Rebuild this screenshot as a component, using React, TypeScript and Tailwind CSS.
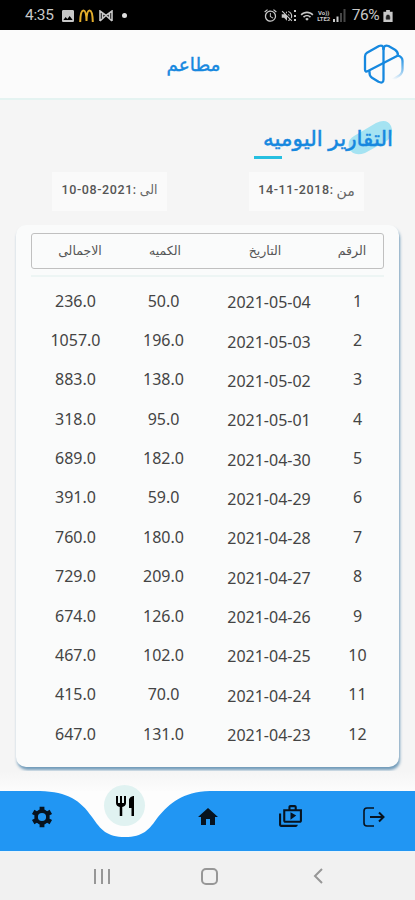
import React from 'react';
import {
  MdAlarm,
  MdHome,
  MdImage,
  MdOutlineShopTwo,
  MdRestaurant,
  MdVolumeOff,
  MdWifi
} from 'react-icons/md';

interface Report {
  id: number;
  date: string;
  quantity: string;
  total: string;
}

const reports: Report[] = [
  { id: 1, date: '2021-05-04', quantity: '50.0', total: '236.0' },
  { id: 2, date: '2021-05-03', quantity: '196.0', total: '1057.0' },
  { id: 3, date: '2021-05-02', quantity: '138.0', total: '883.0' },
  { id: 4, date: '2021-05-01', quantity: '95.0', total: '318.0' },
  { id: 5, date: '2021-04-30', quantity: '182.0', total: '689.0' },
  { id: 6, date: '2021-04-29', quantity: '59.0', total: '391.0' },
  { id: 7, date: '2021-04-28', quantity: '180.0', total: '760.0' },
  { id: 8, date: '2021-04-27', quantity: '209.0', total: '729.0' },
  { id: 9, date: '2021-04-26', quantity: '126.0', total: '674.0' },
  { id: 10, date: '2021-04-25', quantity: '102.0', total: '467.0' },
  { id: 11, date: '2021-04-24', quantity: '70.0', total: '415.0' },
  { id: 12, date: '2021-04-23', quantity: '131.0', total: '647.0' }
];

const StatusBar: React.FC = () => (
  <div className="flex h-[30px] items-center bg-black pl-[25px] pr-[22px] pt-px font-['Roboto',sans-serif] text-[#c8c8c8]">
    <span className="w-[35px] text-[15.5px] tracking-[-0.3px]">4:35</span>
    <MdImage className="size-4" />
    {/* Golden arches */}
    <svg width="15" height="14" viewBox="0 0 15 14" className="ml-[3px]" fill="none" stroke="#e3ad2b" strokeWidth="2">
      <path d="M1.2 13C1.4 5 2.7 1.5 4.4 1.5S7.4 5 7.5 12C7.6 5 8.8 1.5 10.6 1.5S13.6 5 13.8 13" />
    </svg>
    <svg width="14" height="12" viewBox="0 0 14 12" className="ml-[5px]" fill="none" stroke="currentColor" strokeWidth="1.6">
      <path d="M1 11V1l6 4.500L13 1v10M1 11l6-5.500 6 5.500M3.500 3.500v5M10.500 3.500v5" />
    </svg>
    <span className="ml-[9px] size-[5px] rounded-full bg-[#dedede]" />
    <div className="ml-auto flex items-center">
      <MdAlarm className="size-[15px]" />
      <div className="ml-[2px] flex items-center">
        <MdVolumeOff className="size-[14px]" />
        <span className="h-[11px] border-l-2 border-dotted border-current" />
      </div>
      <MdWifi className="ml-[4px] size-[14px]" />
      <div className="ml-[2px] flex w-[16px] flex-col items-center text-[6px] font-bold leading-[6px]">
        <span>Vo))</span>
        <span>LTE2</span>
      </div>
      <svg width="13" height="13" viewBox="0 0 13 13" className="ml-[1px]" fill="currentColor">
        <path d="M0 10h2v3H0zM3.500 7.500h2V13h-2z" />
        <path d="M7 4h2v9H7zM10.500 0h2v13h-2z" opacity=".35" />
      </svg>
      <span className="ml-[6px] text-[15.5px] tracking-[-0.5px]">76%</span>
      <svg width="10" height="12" viewBox="0 0 10 13" className="ml-[4px]">
        <path d="M3 0h4v2h3v11H0V2h3z" fill="currentColor" />
        <path d="M3 7h4v3H3zM3.700 7V5.500h2.600V7" fill="#222" stroke="#222" strokeWidth=".6" />
      </svg>
    </div>
  </div>
);

const Logo: React.FC = () => (
  <svg width="41" height="42" viewBox="0 0 41 42" fill="none" strokeWidth="2.3" strokeLinejoin="round" strokeLinecap="round">
    <defs>
      <linearGradient id="logoFade" x1="38" y1="14" x2="32" y2="37" gradientUnits="userSpaceOnUse">
        <stop offset="0" stopColor="#1c8fe3" />
        <stop offset=".5" stopColor="#1c8fe3" stopOpacity=".55" />
        <stop offset="1" stopColor="#1c8fe3" stopOpacity="0" />
      </linearGradient>
    </defs>
    <g stroke="#1688df">
      {/* left half, split by the diagonal */}
      <path d="M20.500 6Q20.500 1.500 16 3L4 9.800Q2 11 2 13.500V26.500Q2 29.500 5 28L35 12.500" />
      <path d="M6.500 28.500Q6 32.500 9 34.800L15.500 38.800Q20.500 41 20.500 36.500V6" />
      <path d="M20.500 6Q21 1.500 25.500 3L32 6.800Q35 8.600 35 12.500" />
    </g>
    <path d="M35 12.500Q39.500 14 39.500 18V26Q39.500 30.500 36 32.800L30 36.500" stroke="url(#logoFade)" />
  </svg>
);

const GearIcon: React.FC = () => (
  <svg width="22" height="22" viewBox="-11 -11 22 22" fill="none" stroke="currentColor">
    <circle r="5.900" strokeWidth="3.600" />
    <path
      d="M0-10.200V-6.500M0 10.200V6.500M-8.800-5.100L-5.600-3.200M8.800 5.100L5.600 3.200M8.800-5.100L5.600-3.200M-8.800 5.100L-5.600 3.200"
      strokeWidth="4.800"
    />
  </svg>
);

const LogoutIcon: React.FC = () => (
  <svg width="22" height="20" viewBox="0 0 22 20" fill="none" stroke="#07131f" strokeWidth="1.600">
    <path d="M11 1H4Q1 1 1 4v12q0 3 3 3h7" />
    <path d="M7 10h13M16 5.500l4.500 4.500-4.500 4.500" strokeWidth="2" />
  </svg>
);

const TabBar: React.FC = () => (
  <nav className="relative h-[60px] bg-[#2196f3]">
    {/* Notch under the active tab */}
    <svg width="170" height="47" viewBox="0 0 170 47" className="absolute left-[40px] top-0">
      <path d="M0 0H170C142 1 130 12 118 26C109 39 103 46 85 46C67 46 61 39 52 26C40 9 28 1 0 0Z" fill="#fdfdfd" />
    </svg>
    <div className="relative grid h-full grid-cols-5 place-items-center pb-[9px] text-[#07131f]">
      <GearIcon />
      <div className="relative top-[-11px] flex size-[41px] items-center justify-center rounded-full bg-[#e0f2f1] text-black">
        <MdRestaurant className="size-6" />
      </div>
      <MdHome className="size-[24px]" />
      <MdOutlineShopTwo className="size-[25px]" />
      <LogoutIcon />
    </div>
  </nav>
);

const SystemNav: React.FC = () => (
  <div className="grid h-[49px] grid-cols-[203px_12px_200px] items-center border-t border-[#e8f4fb] bg-[#f1f1f1] text-[#979797]">
    <div className="flex justify-center gap-[5px]">
      <span className="h-[15px] w-[2px] bg-current" />
      <span className="h-[15px] w-[2px] bg-current" />
      <span className="h-[15px] w-[2px] bg-current" />
    </div>
    <span className="-ml-[2px] size-[17px] rounded-[5px] border-2 border-current" />
    <svg width="10" height="16" viewBox="0 0 10 16" className="ml-[98px]" fill="none" stroke="currentColor" strokeWidth="2">
      <path d="M9 1L2 8l7 7" />
    </svg>
  </div>
);

export default function App() {
  return (
    <div className="flex h-[900px] w-[415px] flex-col overflow-hidden bg-[#f5f5f5] font-['Noto_Sans','DejaVu_Sans',sans-serif]">
      <StatusBar />

      <header className="grid h-[70px] grid-cols-[1fr_auto_1fr] items-center border-b-2 border-[#e4f3f1] bg-[#fbfbfb]">
        <span />
        <h1 dir="rtl" className="mr-[28px] text-[18.5px] text-[#1688df] [-webkit-text-stroke:0.4px]">مطاعم</h1>
        <div className="flex justify-end pr-[11px]">
          <Logo />
        </div>
      </header>

      {/* Title */}
      <div className="flex h-[72px] justify-end pr-[22px] pt-[17px]">
        <div className="relative h-[44px]">
          <svg width="48" height="38" viewBox="0 0 48 38" className="absolute right-0 top-[1px]">
            <path d="M9 18L31 5Q42 0 46 8Q50 18 40 24L20 35Q8 39 4 30Q2 22 9 18Z" fill="#a5e3f2" />
          </svg>
          <h2 dir="rtl" className="relative whitespace-nowrap text-[21.5px] leading-[42px] text-[#1688df] [-webkit-text-stroke:0.5px]">
            التقارير اليوميه
          </h2>
          <span className="absolute bottom-[2px] left-[-9px] h-[3px] w-[28px] bg-[#26bfe0]" />
        </div>
      </div>

      {/* Date range */}
      <div className="flex h-[39px] justify-between pl-[52px] pr-[51px] text-[12.5px] text-[#666]">
        <div dir="rtl" className="flex w-[115px] items-center justify-center gap-[3px] bg-[#fafafa] pb-[2px]">
          <span>الى</span>
          <span dir="ltr" className="font-['Roboto',sans-serif] font-medium tracking-[0.6px] text-[#555]">10-08-2021:</span>
        </div>
        <div dir="rtl" className="flex w-[115px] items-center justify-center gap-[3px] bg-[#fafafa] pb-[2px]">
          <span className="text-[14px]">من</span>
          <span dir="ltr" className="font-['Roboto',sans-serif] font-medium tracking-[0.6px] text-[#555]">14-11-2018:</span>
        </div>
      </div>

      <main className="mx-4 mt-[14px] h-[542px] rounded-[10px] bg-[#fafbfb] px-[15px] pt-[8px] shadow-[1px_3px_3px_rgba(70,125,165,0.75)]">
        <div className="grid h-[36px] grid-cols-[96px_74px_126px_48px] items-center rounded-[3px] border border-[#c0c0c0] text-center text-[12.5px] text-[#555]">
          <span>الاجمالى</span>
          <span>الكميه</span>
          <span>التاريخ</span>
          <span>الرقم</span>
        </div>
        <div className="mt-[6px] h-[2px] bg-[#edf5f4]" />
        <div className="mt-[4px]">
          {reports.map((report) => (
            <div
              key={report.id}
              className="grid h-[39.36px] grid-cols-[89px_87px_124px_53px] items-center text-center text-[16px] text-[#444]"
            >
              <span>{report.total}</span>
              <span>{report.quantity}</span>
              <span className="pt-[3px]">{report.date}</span>
              <span>{report.id}</span>
            </div>
          ))}
        </div>
      </main>

      <div className="mt-[4px] h-[20px] shrink-0 bg-linear-to-b from-[#f5f5f5] to-[#fcfcfc]" />
      <TabBar />
      <SystemNav />
    </div>
  );
}
